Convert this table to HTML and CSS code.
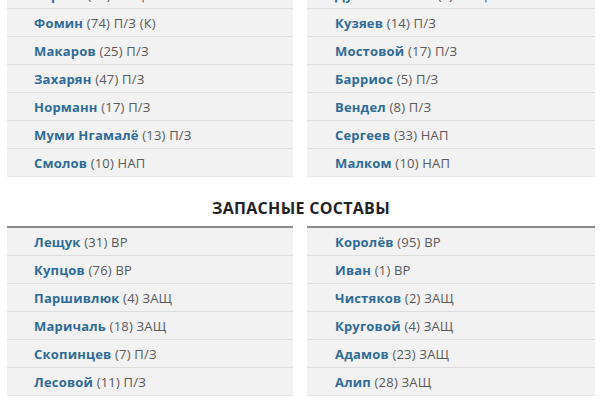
FILE: index.html
```html
<!DOCTYPE html>
<html lang="ru">
<head>
<meta charset="utf-8">
<link rel="stylesheet" href="styles.css">
</head>
<body>
<div class="page">
  <div class="cols">
    <ul class="list">
      <li><span class="nm">Варела</span> (15) ЗАЩ</li>
      <li><span class="nm">Фомин</span> (74) П/З (К)</li>
      <li><span class="nm">Макаров</span> (25) П/З</li>
      <li><span class="nm">Захарян</span> (47) П/З</li>
      <li><span class="nm">Норманн</span> (17) П/З</li>
      <li><span class="nm">Муми Нгамалё</span> (13) П/З</li>
      <li><span class="nm">Смолов</span> (10) НАП</li>
    </ul>
    <ul class="list">
      <li><span class="nm">Дуглас Сантос</span> (3) ЗАЩ</li>
      <li><span class="nm">Кузяев</span> (14) П/З</li>
      <li><span class="nm">Мостовой</span> (17) П/З</li>
      <li><span class="nm">Барриос</span> (5) П/З</li>
      <li><span class="nm">Вендел</span> (8) П/З</li>
      <li><span class="nm">Сергеев</span> (33) НАП</li>
      <li><span class="nm">Малком</span> (10) НАП</li>
    </ul>
  </div>
  <h2 class="title">Запасные составы</h2>
  <div class="cols">
    <ul class="list sub">
      <li><span class="nm">Лещук</span> (31) ВР</li>
      <li><span class="nm">Купцов</span> (76) ВР</li>
      <li><span class="nm">Паршивлюк</span> (4) ЗАЩ</li>
      <li><span class="nm">Маричаль</span> (18) ЗАЩ</li>
      <li><span class="nm">Скопинцев</span> (7) П/З</li>
      <li><span class="nm">Лесовой</span> (11) П/З</li>
    </ul>
    <ul class="list sub">
      <li><span class="nm">Королёв</span> (95) ВР</li>
      <li><span class="nm">Иван</span> (1) ВР</li>
      <li><span class="nm">Чистяков</span> (2) ЗАЩ</li>
      <li><span class="nm">Круговой</span> (4) ЗАЩ</li>
      <li><span class="nm">Адамов</span> (23) ЗАЩ</li>
      <li><span class="nm">Алип</span> (28) ЗАЩ</li>
    </ul>
  </div>
</div>
</body>
</html>
```

FILE: styles.css
```css
html, body {
  margin: 0;
  padding: 0;
  background: #ffffff;
}
body {
  font-family: "Open Sans", "Noto Sans", sans-serif;
  overflow: hidden;
}
.page {
  margin-top: -19px;
  padding-left: 7px;
  width: 588px;
}
.cols {
  display: grid;
  grid-template-columns: 286px 288px;
  column-gap: 14px;
}
.list {
  list-style: none;
  margin: 0;
  padding: 0;
}
.list li {
  height: 27px;
  line-height: 28px;
  border-bottom: 1px solid #dcdcdc;
  background: #f2f2f2;
  padding-left: 27px;
  font-size: 13px;
  letter-spacing: 0.2px;
  color: #5a5a5a;
  white-space: nowrap;
}
.list li:last-child {
  border-bottom: 1px solid #e6e6e6;
}
.list .nm {
  color: #2f6b98;
  font-weight: 700;
}
.cols .list:nth-child(2) li {
  padding-left: 28px;
}
.title {
  margin: 0;
  height: 48px;
  line-height: 62px;
  text-align: center;
  font-size: 16px;
  font-weight: 700;
  color: #1f2328;
  text-transform: uppercase;
  letter-spacing: 0.3px;
}
.sub {
  border-top: 2px solid #8a8a8a;
  margin-top: 1px;
}
```
